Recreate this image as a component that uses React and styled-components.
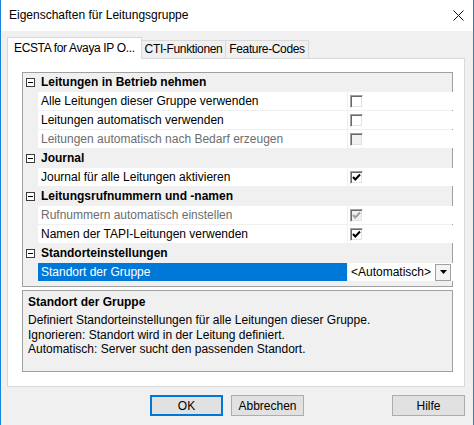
import React from "react";
import styled, { createGlobalStyle, css } from "styled-components";

const GlobalStyle = createGlobalStyle`
  html, body { margin: 0; padding: 0; background: #ffffff; }
  body { font-family: "Liberation Sans", Arial, sans-serif; font-size: 12px; color: #000; }
  * { box-sizing: border-box; }
`;

const Window = styled.div`
  width: 474px;
  height: 425px;
  display: flex;
  flex-direction: column;
  border-left: 1px solid #1883d7;
  border-right: 1px solid #1883d7;
  background: #f0f0f0;
`;

const TitleBar = styled.div`
  height: 31px;
  flex: none;
  background: #ffffff;
  display: flex;
  align-items: center;
  justify-content: space-between;
  padding: 0 9px 0 8px;
`;

const TitleText = styled.span`
  font-size: 12px;
  color: #000;
  margin-top: -1px;
`;

const CloseIcon = styled.svg`
  width: 11px;
  height: 11px;
  margin-top: -1px;
`;

const Body = styled.div`
  flex: 1;
  display: flex;
  flex-direction: column;
  padding: 6px 8px 0 6px;
`;

const TabStrip = styled.div`
  display: flex;
  align-items: flex-end;
  height: 21px;
`;

const Tab = styled.div`
  height: ${(p) => (p.$active ? 22 : 18)}px;
  width: ${(p) => p.$w}px;
  display: flex;
  align-items: center;
  justify-content: ${(p) => (p.$active ? "flex-start" : "center")};
  padding: ${(p) => (p.$active ? "0 0 2px 6px" : "0 0 1px 0")};
  border: 1px solid #d9d9d9;
  border-bottom: none;
  background: ${(p) => (p.$active ? "#ffffff" : "#f0f0f0")};
  margin-bottom: ${(p) => (p.$active ? "-1px" : "0")};
  margin-left: ${(p) => (p.$first ? "0" : "-1px")};
  position: relative;
  z-index: ${(p) => (p.$active ? 2 : 1)};
  white-space: nowrap;
  letter-spacing: -0.35px;
  overflow: hidden;
`;

const TabPanel = styled.div`
  width: 458px;
  height: 329px;
  background: #ffffff;
  border: 1px solid #d9d9d9;
  padding: 13px 0 0 14px;
  display: flex;
  flex-direction: column;
`;

const Grid = styled.div`
  width: 431px;
  height: 215px;
  border: 1px solid #a0a0a0;
  background: #f0f0f0;
  display: flex;
  flex-direction: column;
  gap: 1px;
`;

const Row = styled.div`
  height: 18px;
  display: grid;
  grid-template-columns: 14px 309px 105px;
  column-gap: 1px;
  flex: none;
`;

const Margin = styled.div`
  display: flex;
  align-items: center;
  justify-content: flex-start;
  padding-left: 3px;
`;

const Toggle = styled.span`
  width: 9px;
  height: 9px;
  border: 1px solid #3c3c3c;
  background: #ffffff;
  position: relative;
  margin-top: 1px;
  &::after {
    content: "";
    position: absolute;
    left: 1px;
    top: 3px;
    width: 5px;
    height: 1px;
    background: #000;
  }
`;

const CategoryLabel = styled.div`
  grid-column: 2 / 4;
  font-weight: bold;
  padding-left: 3px;
  display: flex;
  align-items: center;
  white-space: nowrap;
`;

const NameCell = styled.div`
  display: flex;
  align-items: center;
  padding-left: 3px;
  white-space: nowrap;
  overflow: hidden;
  ${(p) =>
    p.$selected
      ? css`
          background: #0078d7;
          color: #ffffff;
        `
      : css`
          background: #ffffff;
          color: ${p.$disabled ? "#6d6d6d" : "#000000"};
        `}
`;

const ValueCell = styled.div`
  background: #ffffff;
  display: flex;
  align-items: center;
  padding-left: 2px;
  white-space: nowrap;
`;

const Check = styled.span`
  width: 13px;
  height: 13px;
  display: flex;
  align-items: center;
  justify-content: center;
  border-top: 1px solid #a0a0a0;
  border-left: 1px solid #a0a0a0;
  border-right: 1px solid #ffffff;
  border-bottom: 1px solid #ffffff;
  box-shadow: inset 1px 1px 0 #696969, inset -1px -1px 0 #e3e3e3;
  background: ${(p) => (p.$disabled ? "#f0f0f0" : "#ffffff")};
`;

const ValueText = styled.span`
  flex: 1;
  padding-left: 1px;
`;

const DropButton = styled.span`
  width: 16px;
  height: 17px;
  border: 1px solid #a0a0a0;
  background: #f4f4f4;
  display: flex;
  align-items: center;
  justify-content: center;
  margin-right: 2px;
`;

const Description = styled.div`
  width: 431px;
  height: 82px;
  margin-top: 3px;
  border: 1px solid #a0a0a0;
  background: #f0f0f0;
  padding: 3px 6px 0 5px;
`;

const DescTitle = styled.div`
  font-weight: bold;
  line-height: 16px;
  margin-bottom: 3px;
`;

const DescLine = styled.div`
  line-height: 14.5px;
`;

const ButtonRow = styled.div`
  display: flex;
  margin-top: 8px;
  padding-left: 143px;
  gap: 8px;
`;

const Button = styled.button`
  width: 73px;
  height: 21px;
  font-family: "Liberation Sans", Arial, sans-serif;
  font-size: 12px;
  color: #000;
  background: #e1e1e1;
  border: ${(p) => (p.$default ? "2px solid #0078d7" : "1px solid #adadad")};
  padding: 0;
  margin-left: ${(p) => (p.$push ? "auto" : "0")};
`;

const CheckMark = ({ color }) => (
  <svg width="9" height="9" viewBox="0 0 9 9">
    <polyline points="1,4 3.3,6.5 8,1.5" fill="none" stroke={color} strokeWidth="2" />
  </svg>
);

const rows = [
  { type: "cat", label: "Leitungen in Betrieb nehmen" },
  { label: "Alle Leitungen dieser Gruppe verwenden", check: false },
  { label: "Leitungen automatisch verwenden", check: false },
  { label: "Leitungen automatisch nach Bedarf erzeugen", check: false, disabled: true },
  { type: "cat", label: "Journal" },
  { label: "Journal für alle Leitungen aktivieren", check: true },
  { type: "cat", label: "Leitungsrufnummern und -namen" },
  { label: "Rufnummern automatisch einstellen", check: true, disabled: true },
  { label: "Namen der TAPI-Leitungen verwenden", check: true },
  { type: "cat", label: "Standorteinstellungen" },
  { label: "Standort der Gruppe", value: "<Automatisch>", selected: true },
];

export default function App() {
  return (
    <>
      <GlobalStyle />
      <Window>
        <TitleBar>
          <TitleText>Eigenschaften für Leitungsgruppe</TitleText>
          <CloseIcon viewBox="0 0 11 11">
            <path d="M0.5 0.5 L10.5 10.5 M10.5 0.5 L0.5 10.5" stroke="#111" strokeWidth="1" fill="none" />
          </CloseIcon>
        </TitleBar>
        <Body>
          <TabStrip>
            <Tab $active $first $w={135}>ECSTA for Avaya IP O...</Tab>
            <Tab $w={85}>CTI-Funktionen</Tab>
            <Tab $w={84}>Feature-Codes</Tab>
          </TabStrip>
          <TabPanel>
            <Grid>
              {rows.map((r, i) =>
                r.type === "cat" ? (
                  <Row key={i}>
                    <Margin>
                      <Toggle />
                    </Margin>
                    <CategoryLabel>{r.label}</CategoryLabel>
                  </Row>
                ) : (
                  <Row key={i}>
                    <Margin />
                    <NameCell $disabled={r.disabled} $selected={r.selected}>
                      {r.label}
                    </NameCell>
                    <ValueCell>
                      {r.value ? (
                        <>
                          <ValueText>{r.value}</ValueText>
                          <DropButton>
                            <svg width="7" height="4" viewBox="0 0 7 4">
                              <path d="M0 0 H7 L3.5 4 Z" fill="#000" />
                            </svg>
                          </DropButton>
                        </>
                      ) : (
                        <Check $disabled={r.disabled}>
                          {r.check && <CheckMark color={r.disabled ? "#a0a0a0" : "#000"} />}
                        </Check>
                      )}
                    </ValueCell>
                  </Row>
                )
              )}
            </Grid>
            <Description>
              <DescTitle>Standort der Gruppe</DescTitle>
              <DescLine>Definiert Standorteinstellungen für alle Leitungen dieser Gruppe.</DescLine>
              <DescLine>Ignorieren: Standort wird in der Leitung definiert.</DescLine>
              <DescLine>Automatisch: Server sucht den passenden Standort.</DescLine>
            </Description>
          </TabPanel>
          <ButtonRow>
            <Button $default>OK</Button>
            <Button>Abbrechen</Button>
            <Button $push>Hilfe</Button>
          </ButtonRow>
        </Body>
      </Window>
    </>
  );
}
